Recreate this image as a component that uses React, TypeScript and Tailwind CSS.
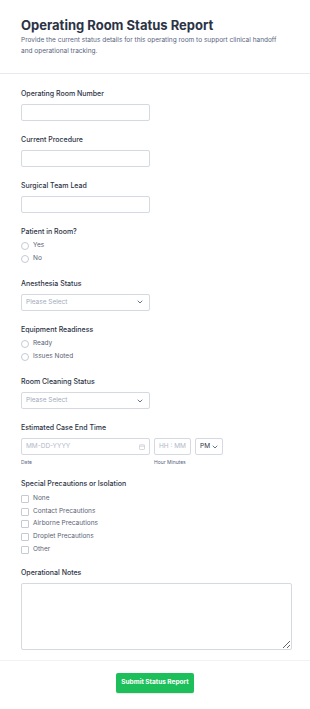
import React from "react";

const Label = ({ children }: { children: React.ReactNode }) => (
  <div className="text-[7px] leading-[10px] font-medium text-[#2c3345] mb-[5px]">{children}</div>
);

const Chevron = () => (
  <svg width="6" height="4" viewBox="0 0 6 4" className="shrink-0">
    <path d="M1 1 L3 3 L5 1" fill="none" stroke="#57647e" strokeWidth="0.9" strokeLinecap="round" strokeLinejoin="round" />
  </svg>
);

const TextInput = () => (
  <input className="block w-[129px] h-[17px] border border-[#d5d9e2] rounded-[2px] bg-white outline-none" />
);

const SelectBox = () => (
  <div className="w-[129px] h-[17px] border border-[#d5d9e2] rounded-[2px] bg-white flex items-center justify-between pl-[4px] pr-[6px]">
    <span className="text-[6.5px] text-[#a3aabb]">Please Select</span>
    <Chevron />
  </div>
);

const Radio = ({ label }: { label: string }) => (
  <div className="flex items-center h-[12.7px] gap-[4px]">
    <span className="w-[8px] h-[8px] rounded-full border border-[#c5cad5] bg-white" />
    <span className="text-[6.5px] text-[#596275]">{label}</span>
  </div>
);

const Check = ({ label }: { label: string }) => (
  <div className="flex items-center h-[12.8px] gap-[4px]">
    <span className="w-[8px] h-[8px] rounded-[1px] border border-[#c5cad5] bg-white" />
    <span className="text-[6.5px] text-[#596275]">{label}</span>
  </div>
);

export default function App() {
  return (
    <div className="w-[310px] h-[709px] bg-white font-['Inter',sans-serif] overflow-hidden">
      <div className="px-[21px] pt-[17px] pb-[16px]">
        <h1 className="text-[13px] leading-[16px] font-bold text-[#2c3345]">Operating Room Status Report</h1>
        <p className="mt-[2px] text-[6.5px] leading-[10.8px] text-[#57647e]">
          Provide the current status details for this operating room to support clinical handoff
          <br />
          and operational tracking.
        </p>
      </div>
      <div className="h-px bg-[#e8e9ef]" />
      <div className="pl-[21px] pr-[18px] pt-[15px] pb-[10px] flex flex-col gap-[14px]">
        <div>
          <Label>Operating Room Number</Label>
          <TextInput />
        </div>
        <div>
          <Label>Current Procedure</Label>
          <TextInput />
        </div>
        <div>
          <Label>Surgical Team Lead</Label>
          <TextInput />
        </div>
        <div>
          <Label>Patient in Room?</Label>
          <div className="-mt-[2px]">
            <Radio label="Yes" />
            <Radio label="No" />
          </div>
        </div>
        <div>
          <Label>Anesthesia Status</Label>
          <SelectBox />
        </div>
        <div>
          <Label>Equipment Readiness</Label>
          <div className="-mt-[2px]">
            <Radio label="Ready" />
            <Radio label="Issues Noted" />
          </div>
        </div>
        <div>
          <Label>Room Cleaning Status</Label>
          <SelectBox />
        </div>
        <div>
          <Label>Estimated Case End Time</Label>
          <div className="flex gap-[4px]">
            <div className="flex flex-col">
              <div className="w-[129px] h-[17px] border border-[#d5d9e2] rounded-[2px] flex items-center justify-between pl-[4px] pr-[4px]">
                <span className="text-[6.5px] text-[#b3b9c8]">MM-DD-YYYY</span>
                <svg width="6" height="6" viewBox="0 0 6 6">
                  <rect x="0.5" y="0.8" width="5" height="4.7" rx="0.6" fill="none" stroke="#c3c8d3" strokeWidth="0.7" />
                  <line x1="0.5" y1="2.2" x2="5.5" y2="2.2" stroke="#c3c8d3" strokeWidth="0.7" />
                </svg>
              </div>
              <span className="mt-[4px] text-[5px] leading-[6px] text-[#57647e]">Date</span>
            </div>
            <div className="flex flex-col">
              <div className="w-[37px] h-[17px] border border-[#d5d9e2] rounded-[2px] flex items-center pl-[4px]">
                <span className="text-[6.5px] text-[#b3b9c8]">HH : MM</span>
              </div>
              <span className="mt-[4px] text-[5px] leading-[6px] text-[#57647e]">Hour Minutes</span>
            </div>
            <div className="w-[28px] h-[17px] border border-[#d5d9e2] rounded-[2px] flex items-center justify-between pl-[4px] pr-[4px]">
              <span className="text-[6.5px] text-[#2c3345]">PM</span>
              <Chevron />
            </div>
          </div>
        </div>
        <div>
          <Label>Special Precautions or Isolation</Label>
          <div className="-mt-[2px] -mb-[2px]">
            <Check label="None" />
            <Check label="Contact Precautions" />
            <Check label="Airborne Precautions" />
            <Check label="Droplet Precautions" />
            <Check label="Other" />
          </div>
        </div>
        <div>
          <Label>Operational Notes</Label>
          <textarea className="block w-[271px] h-[67px] border border-[#d5d9e2] rounded-[2px] outline-none resize" />
        </div>
      </div>
      <div className="h-px bg-[#f1f2f7]" />
      <div className="flex justify-center pt-[12px]">
        <button className="w-[78px] h-[20px] rounded-[2px] bg-[#1dbf5a] text-white text-[6.5px] font-bold shadow-[0_1px_1px_rgba(0,0,0,0.1)]">
          Submit Status Report
        </button>
      </div>
    </div>
  );
}
